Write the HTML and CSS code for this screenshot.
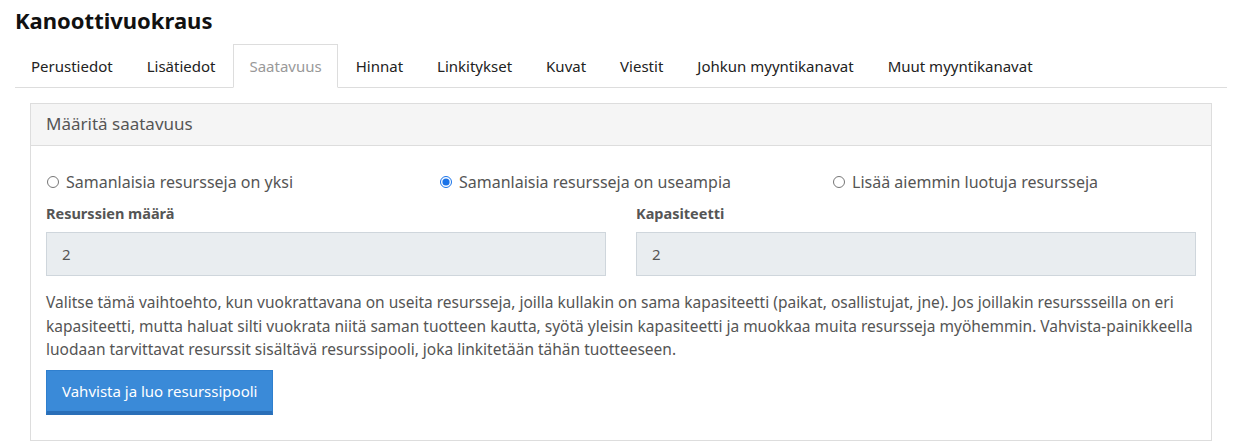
FILE: index.html
```html
<!DOCTYPE html>
<html lang="fi">
<head>
    <meta charset="UTF-8">
    <meta name="viewport" content="width=device-width, initial-scale=1.0">
    <title>Kanoottivuokraus</title>
    <link rel="stylesheet" href="styles.css">
</head>
<body>
    <div class="page">
        <h1 class="title">Kanoottivuokraus</h1>

        <ul class="tabs">
            <li class="tab">Perustiedot</li>
            <li class="tab">Lisätiedot</li>
            <li class="tab active">Saatavuus</li>
            <li class="tab">Hinnat</li>
            <li class="tab">Linkitykset</li>
            <li class="tab">Kuvat</li>
            <li class="tab">Viestit</li>
            <li class="tab">Johkun myyntikanavat</li>
            <li class="tab">Muut myyntikanavat</li>
        </ul>

        <div class="panel">
            <div class="panel-heading">Määritä saatavuus</div>
            <div class="panel-body">
                <div class="choices">
                    <label class="choice"><input type="radio" name="mode"> Samanlaisia resursseja on yksi</label>
                    <label class="choice"><input type="radio" name="mode" checked> Samanlaisia resursseja on useampia</label>
                    <label class="choice"><input type="radio" name="mode"> Lisää aiemmin luotuja resursseja</label>
                </div>

                <div class="fields">
                    <div class="field">
                        <label class="field-label">Resurssien määrä</label>
                        <input class="field-input" type="text" value="2" readonly>
                    </div>
                    <div class="field">
                        <label class="field-label">Kapasiteetti</label>
                        <input class="field-input" type="text" value="2" readonly>
                    </div>
                </div>

                <p class="help">Valitse tämä vaihtoehto, kun vuokrattavana on useita resursseja, joilla kullakin on sama kapasiteetti (paikat, osallistujat, jne). Jos joillakin resurssseilla on eri kapasiteetti, mutta haluat silti vuokrata niitä saman tuotteen kautta, syötä yleisin kapasiteetti ja muokkaa muita resursseja myöhemmin. Vahvista&#8209;painikkeella luodaan tarvittavat resurssit sisältävä resurssipooli, joka linkitetään tähän tuotteeseen.</p>

                <button class="btn-primary">Vahvista ja luo resurssipooli</button>
            </div>
        </div>
    </div>
</body>
</html>
```

FILE: styles.css
```css
:root {
    --text: #555;
    --border: #ddd;
    --blue: #3a8ad8;
    --blue-dark: #2a6fb8;
}

* {
    box-sizing: border-box;
}

body {
    margin: 0;
    background: #fff;
    color: var(--text);
    font-family: 'Noto Sans', 'Open Sans', sans-serif;
    font-size: 15px;
}

.page {
    padding: 0 7px 0 15px;
}

.title {
    margin: 0;
    padding-top: 6px;
    height: 44px;
    font-size: 22px;
    font-weight: 700;
    color: #111;
    line-height: 28px;
}

.tabs {
    display: flex;
    list-style: none;
    margin: 0;
    padding: 0;
    border-bottom: 1px solid var(--border);
}

.tab {
    padding: 0 15px;
    margin-right: 2px;
    height: 44px;
    line-height: 43px;
    color: #222;
    border: 1px solid transparent;
    margin-bottom: -1px;
}

.tab.active {
    color: #999;
    border-color: var(--border);
    border-bottom-color: #fff;
    background: #fff;
}

.panel {
    margin: 15px 15px 0;
    border: 1px solid var(--border);
}

.panel-heading {
    background: #f5f5f5;
    border-bottom: 1px solid var(--border);
    height: 42px;
    line-height: 40px;
    padding: 0 15px;
    font-size: 17px;
    color: #555;
}

.panel-body {
    padding: 24px 15px 25px;
}

.choices {
    display: grid;
    grid-template-columns: 393px 393px 1fr;
    font-size: 16px;
}

.choice {
    display: flex;
    align-items: center;
    gap: 7px;
    line-height: 24px;
}

.choice input {
    margin: 0 0 0 1px;
    width: 12px;
    height: 12px;
    accent-color: #1a73e8;
}

.fields {
    display: grid;
    grid-template-columns: 1fr 1fr;
    gap: 30px;
    margin-top: 9px;
}

.field-label {
    display: block;
    font-weight: 700;
    font-size: 14.5px;
    line-height: 20px;
    margin-bottom: 9px;
}

.field-input {
    display: block;
    width: 100%;
    height: 44px;
    padding: 0 15px;
    border: 1px solid #cfd6dc;
    background: #e9edf0;
    color: #555;
    font: inherit;
    outline: none;
}

.help {
    margin: 15px 0 0;
    font-size: 15.5px;
    line-height: 23.5px;
}

.btn-primary {
    margin-top: 8px;
    height: 45px;
    padding: 0 15px;
    border: 1px solid #2f7fce;
    border-bottom: 4px solid var(--blue-dark);
    background: var(--blue);
    color: #fff;
    font: inherit;
    cursor: pointer;
}
```
